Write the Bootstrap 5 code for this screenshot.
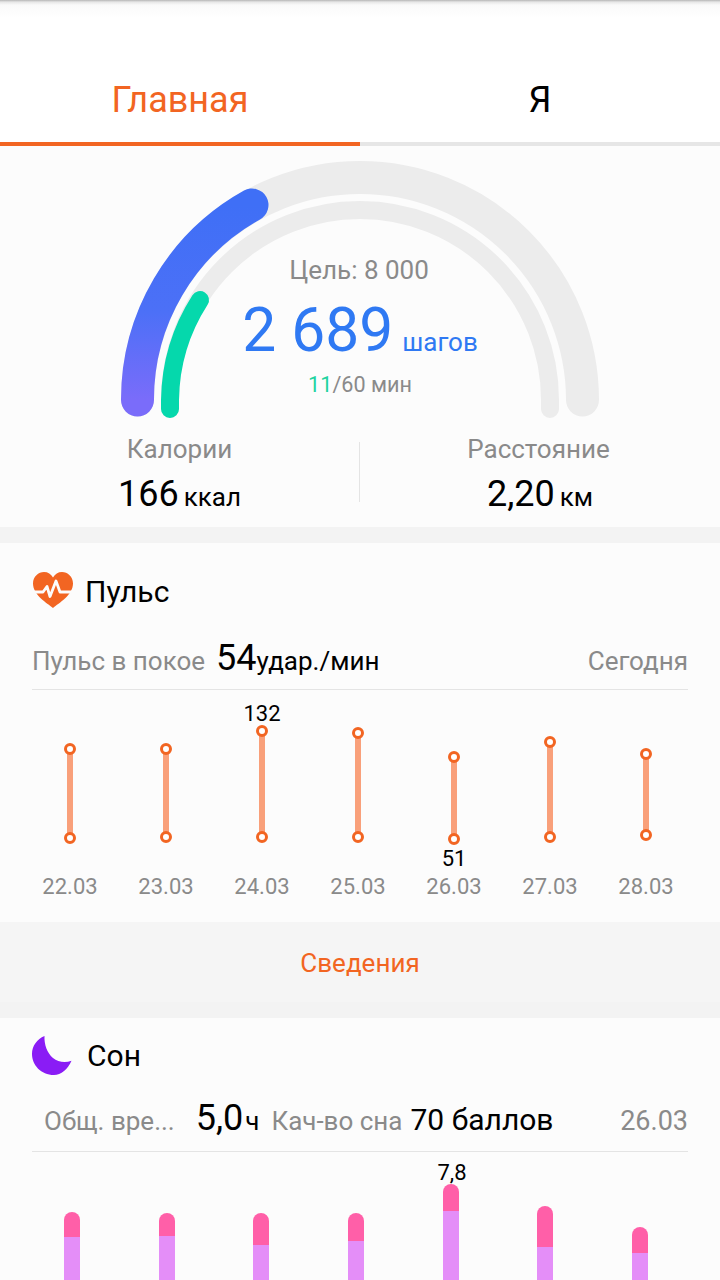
<!DOCTYPE html>
<html lang="ru">
<head>
<meta charset="utf-8">
<title>Главная</title>
<link href="https://cdn.jsdelivr.net/npm/bootstrap@5.3.0/dist/css/bootstrap.min.css" rel="stylesheet">
<style>
html,body{height:1280px;overflow:hidden}
body{font-family:Roboto,"Noto Sans",sans-serif;background:#f3f3f3;color:#000;width:720px}
.topbar{height:142px;background:linear-gradient(#b5b5b5 0,#e6e6e6 2px,#fafafa 5px,#fff 18px)}
.tab-item{flex:0 0 360px;height:142px;padding-top:77px;font-size:36px;line-height:46px;text-align:center;color:#000}
.tab-item.on{color:#f26522}
.tabline{height:4px;background:#e6e6e6}
.tabline div{width:360px;height:4px;background:#f26522}
.panel{background:#fcfcfc}
.gauge{height:381px;position:relative}
.gauge svg{display:block}
.g-center{position:absolute;left:0;right:0;top:108px;text-align:center}
.g-goal{font-size:26px;line-height:32px;color:#8a8a8a;padding-right:2px}
.g-steps{color:#2f79f3;line-height:76px;height:76px;margin-top:7px;display:flex;justify-content:center;align-items:baseline;gap:9px}
.g-steps b{font-weight:400;font-size:60.500px}
.g-steps span{font-size:26px}
.g-min{font-size:21.600px;line-height:28px;color:#8a8a8a;margin-top:2px}
.g-min i{font-style:normal;color:#1fd3a0}
.g-stats{position:absolute;left:0;right:0;top:286px;display:flex}
.g-stat{flex:0 0 359px;text-align:center}
.g-stat-r{flex:0 0 360px}
.g-stat-r .g-lbl{padding-right:3px}
.g-rule{flex:0 0 1px;height:60px;margin-top:10px;background:#e4e4e4}
.g-lbl{font-size:26px;line-height:34px;color:#8a8a8a}
.g-val{font-size:36px;line-height:50px;margin-top:3px}
.g-val span{font-size:26px;margin-left:5px}
.gapband{height:16px;background:#f3f3f3}
.sec-head{padding:0 32px 0 33px;height:88px;padding-top:29px;gap:12px;font-size:30px;line-height:40px}
.sub-row{margin:0 32px;height:59px;border-bottom:1px solid #e4e4e4;align-items:baseline;white-space:nowrap}
.sub-grey{color:#8a8a8a;font-size:26px}
.sub-big{font-size:36px}
.sub-mid{font-size:26px}
.sub-score{font-size:30px}
.sub-date{font-size:27px}
.after-rest{margin-left:11px}
.after-total{margin-left:21px}
.unit-h{margin-left:2px}
.after-unit{margin-left:12px}
.pulse-sec{height:379px}
.pulse-plot{display:block}
.dates{display:flex;padding:0 22px;margin-top:-3px}
.dates div{flex:0 0 96px;text-align:center;color:#8a8a8a;font-size:22px;line-height:30px}
.more{height:80px;padding-top:3px;background:#f5f5f5;color:#f26522;font-size:26px}
.sleep-sec{height:262px;overflow:hidden}
.sleep-sec .sec-head{height:73px;padding-top:18px;padding-left:32px;gap:15px}
.sleep-sec .sub-row{height:61px}
svg text{font-family:Roboto,sans-serif}
</style>
</head>
<body>
<div class="topbar d-flex">
  <div class="tab-item on">Главная</div>
  <div class="tab-item">Я</div>
</div>
<div class="tabline"><div></div></div>

<section class="panel gauge">
  <svg width="720" height="280" viewBox="0 146 720 280" fill="none">
    <defs><linearGradient id="bl" x1="0" y1="0" x2="0" y2="1"><stop offset="0" stop-color="#3f6ff6"/><stop offset=".55" stop-color="#4c70f7"/><stop offset="1" stop-color="#7a6cfa"/></linearGradient></defs>
    <path d="M137.500 400A222.500 222.500 0 0 1 582.500 400" stroke="#ececec" stroke-width="33" stroke-linecap="round"/>
    <path d="M170 409V400A190 190 0 0 1 550 400V409" stroke="#ececec" stroke-width="18" stroke-linecap="round"/>
    <path d="M137.500 400A222.500 222.500 0 0 1 252 205" stroke="url(#bl)" stroke-width="33" stroke-linecap="round"/>
    <path d="M170 409V400A190 190 0 0 1 200 300" stroke="#05d8ac" stroke-width="18" stroke-linecap="round"/>
  </svg>
  <div class="g-center">
    <div class="g-goal">Цель: 8 000</div>
    <div class="g-steps"><b>2 689</b><span>шагов</span></div>
    <div class="g-min"><i>11</i>/60 мин</div>
  </div>
  <div class="g-stats">
    <div class="g-stat"><div class="g-lbl">Калории</div><div class="g-val">166<span>ккал</span></div></div>
    <div class="g-rule"></div>
    <div class="g-stat g-stat-r"><div class="g-lbl">Расстояние</div><div class="g-val">2,20<span>км</span></div></div>
  </div>
</section>
<div class="gapband"></div>

<section class="panel pulse-sec">
  <div class="sec-head d-flex">
    <svg width="40" height="36" viewBox="0 0 40 36" class="flex-shrink-0"><path d="M20 36C14 31 0 23 0 11.500 0 4.500 5.500 0 11 0c4 0 7 2 9 5.500C22 2 25 0 29 0c5.500 0 11 4.500 11 11.500C40 23 26 31 20 36Z" fill="#f26522"/><path d="M0 20H10L14 14.500 17 24.500 23 9 27 20H40" fill="none" stroke="#fcfcfc" stroke-width="2.800" stroke-linejoin="round"/></svg>
    <span>Пульс</span>
  </div>
  <div class="sub-row d-flex">
    <span class="sub-grey">Пульс в покое</span>
    <span class="sub-big after-rest">54</span><span class="sub-mid">удар./мин</span>
    <span class="sub-grey ms-auto">Сегодня</span>
  </div>
  <svg class="pulse-plot" width="720" height="185" viewBox="0 690 720 185">
    <g stroke="#f9a07a" stroke-width="6">
      <path d="M70 749V838M166 749V837M262 731V837M358 733V837M454 757V839M550 742V837M646 754V835"/>
    </g>
    <g fill="#fff" stroke="#f26522" stroke-width="3">
      <circle cx="70" cy="749" r="4.500"/><circle cx="70" cy="838" r="4.500"/>
      <circle cx="166" cy="749" r="4.500"/><circle cx="166" cy="837" r="4.500"/>
      <circle cx="262" cy="731" r="4.500"/><circle cx="262" cy="837" r="4.500"/>
      <circle cx="358" cy="733" r="4.500"/><circle cx="358" cy="837" r="4.500"/>
      <circle cx="454" cy="757" r="4.500"/><circle cx="454" cy="839" r="4.500"/>
      <circle cx="550" cy="742" r="4.500"/><circle cx="550" cy="837" r="4.500"/>
      <circle cx="646" cy="754" r="4.500"/><circle cx="646" cy="835" r="4.500"/>
    </g>
    <text x="262" y="721" font-size="22" text-anchor="middle" fill="#000">132</text>
    <text x="454" y="866" font-size="22" text-anchor="middle" fill="#000">51</text>
  </svg>
  <div class="dates"><div>22.03</div><div>23.03</div><div>24.03</div><div>25.03</div><div>26.03</div><div>27.03</div><div>28.03</div></div>
</section>
<div class="more d-flex align-items-center justify-content-center">Сведения</div>
<div class="gapband"></div>

<section class="panel sleep-sec">
  <div class="sec-head d-flex">
    <svg width="40" height="39" viewBox="0 0 40 39" class="flex-shrink-0"><path d="M12.500 0C12 8 15 17 21 22 26 26 33 27 39.500 24.700 36 33 29 39 22 39 9 39 0 29 0 18 0 10 5 3 12.500 0Z" fill="#8a1cf5"/></svg>
    <span>Сон</span>
  </div>
  <div class="sub-row d-flex">
    <span class="sub-grey ms-2 ps-1">Общ. вре...</span>
    <span class="sub-big after-total">5,0</span><span class="sub-mid unit-h">ч</span>
    <span class="sub-grey after-unit">Кач-во сна</span>
    <span class="sub-score ms-2">70 баллов</span>
    <span class="sub-date sub-grey ms-auto">26.03</span>
  </div>
  <svg class="d-block" width="720" height="129" viewBox="0 1152 720 129">
    <text x="452" y="1180" font-size="22" text-anchor="middle" fill="#000">7,8</text>
    <g fill="#e48ef8"><rect x="64" y="1237" width="16" height="44"/><rect x="159" y="1236" width="16" height="45"/><rect x="253" y="1245" width="16" height="36"/><rect x="348" y="1241" width="16" height="40"/><rect x="443" y="1211" width="16" height="70"/><rect x="537" y="1247" width="16" height="34"/><rect x="632" y="1253" width="16" height="28"/></g>
    <g fill="#ff5fa8"><path d="M64 1237v-17a8 8 0 0 1 16 0v17Z"/><path d="M159 1236v-15a8 8 0 0 1 16 0v15Z"/><path d="M253 1245v-24a8 8 0 0 1 16 0v24Z"/><path d="M348 1241v-20a8 8 0 0 1 16 0v20Z"/><path d="M443 1211v-19a8 8 0 0 1 16 0v19Z"/><path d="M537 1247v-33a8 8 0 0 1 16 0v33Z"/><path d="M632 1253v-18a8 8 0 0 1 16 0v18Z"/></g>
  </svg>
</section>
<script src="https://cdn.jsdelivr.net/npm/bootstrap@5.3.0/dist/js/bootstrap.bundle.min.js"></script>
</body>
</html>
